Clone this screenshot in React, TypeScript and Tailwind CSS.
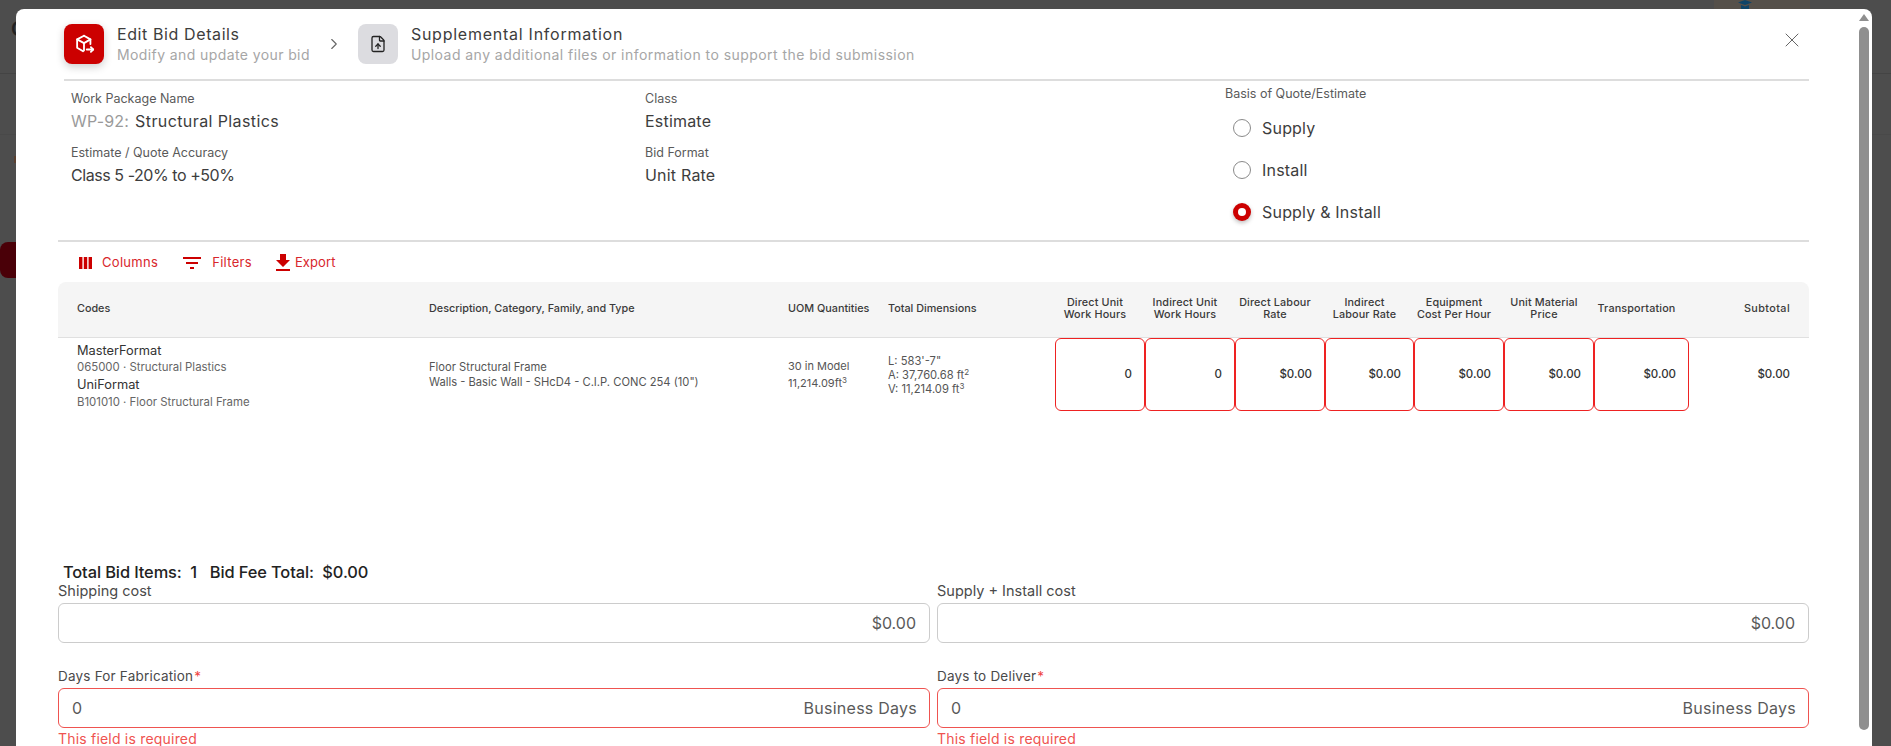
import { ChevronRight, X, FileUp } from "lucide-react";

const FONT = "[font-family:Inter,'Noto_Sans',sans-serif]";

type Column = {
  label: string[];
  width: string;
  value: string;
};

const inputColumns: Column[] = [
  { label: ["Direct Unit", "Work Hours"], width: "w-[90px]", value: "0" },
  { label: ["Indirect Unit", "Work Hours"], width: "w-[90px]", value: "0" },
  { label: ["Direct Labour", "Rate"], width: "w-[90px]", value: "$0.00" },
  { label: ["Indirect", "Labour Rate"], width: "w-[89px]", value: "$0.00" },
  { label: ["Equipment", "Cost Per Hour"], width: "w-[90px]", value: "$0.00" },
  { label: ["Unit Material", "Price"], width: "w-[90px]", value: "$0.00" },
  { label: ["Transportation"], width: "w-[95px]", value: "$0.00" },
];

function PackageIcon() {
  return (
    <svg viewBox="0 0 24 24" className="h-[22px] w-[22px]" fill="none" stroke="white" strokeWidth="2" strokeLinecap="round" strokeLinejoin="round">
      <path d="M12 3 4.5 7v9l6.5 4" />
      <path d="M12 3l7 4v5" />
      <path d="M4.5 7 12 11l7-4" />
      <path d="M12 11v8" />
      <path d="M15 18h7" />
      <path d="m19.5 15.5 2.5 2.5-2.5 2.5" />
    </svg>
  );
}

function ColumnsIcon() {
  return (
    <svg viewBox="0 0 13 12" className="h-3 w-[13px]" fill="#cc0000">
      <rect x="0" y="0" width="3.4" height="12" />
      <rect x="4.8" y="0" width="3.4" height="12" />
      <rect x="9.6" y="0" width="3.4" height="12" />
    </svg>
  );
}

function FilterIcon() {
  return (
    <svg viewBox="0 0 18 12" className="h-3 w-[18px]" fill="#cc0000">
      <rect x="0" y="0" width="18" height="2" />
      <rect x="3" y="5" width="12" height="2" />
      <rect x="7" y="10" width="4" height="2" />
    </svg>
  );
}

function ExportIcon() {
  return (
    <svg viewBox="0 0 14 17" className="h-[17px] w-[14px]" fill="#cc0000">
      <path d="M4 0h6v6h4l-7 7-7-7h4z" />
      <rect x="0" y="15" width="14" height="2" />
    </svg>
  );
}

function CapIcon() {
  return (
    <svg viewBox="0 0 14 9" className="h-[9px] w-[14px]" fill="#0f4468">
      <path d="M7 0 14 2.5 7 5 0 2.5z" />
      <path d="M3 5v4h8V5L7 6.4z" />
    </svg>
  );
}

function Radio({ label, checked }: { label: string; checked?: boolean }) {
  return (
    <div className="flex h-[42px] items-center gap-[11px] pl-2">
      {checked ? (
        <span className="flex h-[18px] w-[18px] items-center justify-center rounded-full bg-[#cc0000] shadow-[0_2px_4px_rgba(0,0,0,0.25)]">
          <span className="h-2 w-2 rounded-full bg-white" />
        </span>
      ) : (
        <span className="h-[18px] w-[18px] rounded-full border border-[#8a8a8a]" />
      )}
      <span className="text-[16px] tracking-[0.2px] text-[#3d3d3d]">{label}</span>
    </div>
  );
}

function InfoField({ label, children }: { label: string; children: React.ReactNode }) {
  return (
    <div className="flex flex-col">
      <span className="text-[12.5px] leading-[14px] text-[#5a5a5a]">{label}</span>
      <span className="mt-[4.5px] text-[16px] leading-[20px] tracking-[0.2px] text-[#3d3d3d]">{children}</span>
    </div>
  );
}

function CostField({ label, value }: { label: string; value: string }) {
  return (
    <div className="flex min-w-0 flex-1 flex-col">
      <label className="text-[14.5px] leading-[16px] text-[#4a4a4a]">{label}</label>
      <div className="mt-1 flex h-10 items-center justify-end rounded-md border border-[#ccc] px-[13px] text-[16px] text-[#5a5a5a]">
        {value}
      </div>
    </div>
  );
}

function DaysField({ label }: { label: string }) {
  return (
    <div className="flex min-w-0 flex-1 flex-col">
      <label className="text-[13.5px] leading-[16px] tracking-[0.2px] text-[#4a4a4a]">
        {label}
        <span className="ml-px text-[#ef4444]">*</span>
      </label>
      <div className="mt-1 flex h-10 items-center justify-between rounded-md border border-[#ef5350] pl-[13px] pr-3 text-[16px] tracking-[0.25px] text-[#5a5a5a]">
        <span>0</span>
        <span>Business Days</span>
      </div>
      <span className="mt-[3px] text-[14px] leading-[16px] tracking-[0.2px] text-[#ef5350]">This field is required</span>
    </div>
  );
}

export default function App() {
  return (
    <div className={`relative h-[746px] w-full overflow-hidden bg-[#4d4d4d] ${FONT}`}>
      {/* page behind the overlay */}
      <div className="absolute left-0 top-[73px] h-px w-full bg-[#444]" />
      <div className="absolute left-0 top-[134px] h-px w-full bg-[#494949]" />
      <div className="absolute left-0 top-[242px] h-9 w-4 rounded-l-lg bg-[#4a0008]" />
      <div className="absolute left-[14px] top-[156px] h-[7px] w-[2px] bg-[#5a4030]" />
      <span className="absolute left-[11px] top-[15px] text-xl font-semibold text-[#222]">C</span>
      <div className="absolute right-[81px] top-0 h-[9px] w-[96px] bg-[#55504a] pl-6">
        <CapIcon />
      </div>

      <div className="pl-4 pr-[19px] pt-[9px]">
        <div className="relative h-[737px] overflow-hidden rounded-t-lg bg-white pl-[42px] pr-[63px]">
          {/* header */}
          <div className="flex h-[70px] items-start justify-between pl-1.5 pt-[15px]">
            <div className="flex items-center">
              <div className="flex h-10 w-10 items-center justify-center rounded-lg bg-[#cc0000] shadow-[0_3px_8px_rgba(0,0,0,0.2)]">
                <PackageIcon />
              </div>
              <div className="ml-[13px] flex flex-col">
                <span className="text-[16px] leading-[20px] tracking-[0.6px] text-[#3d3d3d]">Edit Bid Details</span>
                <span className="mt-[2px] text-[14px] leading-[18px] tracking-[0.4px] text-[#a6a6a6]">Modify and update your bid</span>
              </div>
              <ChevronRight className="ml-[15px] h-[18px] w-[18px] text-[#666]" strokeWidth={1.5} />
              <div className="ml-[15px] flex h-10 w-10 items-center justify-center rounded-lg bg-[#dcdce0]">
                <FileUp className="h-[18px] w-[18px] text-[#222]" strokeWidth={1.75} />
              </div>
              <div className="ml-[13px] flex flex-col">
                <span className="text-[16px] leading-[20px] tracking-[0.75px] text-[#3d3d3d]">Supplemental Information</span>
                <span className="mt-[2px] text-[14px] leading-[18px] tracking-[0.45px] text-[#a6a6a6]">
                  Upload any additional files or information to support the bid submission
                </span>
              </div>
            </div>
            <X className="mr-[5px] mt-[4px] h-6 w-6 text-[#666]" strokeWidth={1} />
          </div>

          {/* bid info */}
          <div className="ml-1.5 border-t-2 border-[#ddd]" />
          <div className="flex h-[161px] border-b-2 border-[#ddd]">
            <div className="flex w-[587px] flex-col gap-[15.5px] pl-[13px] pt-[11px]">
              <InfoField label="Work Package Name">
                <span className="text-[#9a9a9a]">WP-92:</span>
                <span className="ml-[6px] tracking-[0.4px]">Structural Plastics</span>
              </InfoField>
              <InfoField label="Estimate / Quote Accuracy">
                <span className="tracking-[-0.44px]">Class 5 -20% to +50%</span>
              </InfoField>
            </div>
            <div className="flex w-[580px] flex-col gap-[15.5px] pt-[11px]">
              <InfoField label="Class">Estimate</InfoField>
              <InfoField label="Bid Format">Unit Rate</InfoField>
            </div>
            <div className="flex flex-col pt-[6px]">
              <span className="mb-[6px] text-[12.5px] leading-[14px] text-[#5a5a5a]">Basis of Quote/Estimate</span>
              <Radio label="Supply" />
              <Radio label="Install" />
              <Radio label="Supply & Install" checked />
            </div>
          </div>

          {/* toolbar */}
          <div className="flex h-[40px] items-center pl-[21px] pt-px text-[13px] tracking-[0.3px] text-[#d8262c]">
            <span className="flex items-center gap-[10px]">
              <ColumnsIcon />
              Columns
            </span>
            <span className="ml-[25px] flex items-center gap-[11px]">
              <FilterIcon />
              Filters
            </span>
            <span className="ml-6 flex items-center gap-[5px] tracking-[0.1px]">
              <ExportIcon />
              Export
            </span>
          </div>

          {/* table */}
          <div className="rounded-t-lg">
            <div className="flex h-[56px] items-center rounded-t-lg border-b border-[#e0e0e0] bg-[#f5f5f5] pb-[2px] text-[10.8px] font-medium leading-[12px] text-[#3a3a3a]">
              <span className="w-[371px] pl-[19px]">Codes</span>
              <span className="w-[359px]">Description, Category, Family, and Type</span>
              <span className="w-[100px]">UOM Quantities</span>
              <span className="w-[167px]">Total Dimensions</span>
              {inputColumns.map((column) => (
                <span key={column.label.join(" ")} className={`${column.width} pr-[10px] text-center tracking-[0.15px]`}>
                  {column.label.map((line) => (
                    <span key={line} className="block">
                      {line}
                    </span>
                  ))}
                </span>
              ))}
              <span className="flex-1 pr-[19px] text-right tracking-[0.4px]">Subtotal</span>
            </div>
            <div className="flex h-[73px] items-stretch text-[#444]">
              <div className="flex w-[371px] flex-col justify-center pl-[19px] pt-[3px]">
                <span className="text-[12.8px] leading-[17px] text-[#333]">MasterFormat</span>
                <span className="text-[11.4px] leading-[16px] text-[#666]">065000 · Structural Plastics</span>
                <span className="text-[12.8px] leading-[19px] text-[#333]">UniFormat</span>
                <span className="text-[11.4px] leading-[16px] text-[#666]">B101010 · Floor Structural Frame</span>
              </div>
              <div className="flex w-[359px] flex-col justify-center text-[11.2px] leading-[15px] text-[#555]">
                <span>Floor Structural Frame</span>
                <span>Walls - Basic Wall - SHcD4 - C.I.P. CONC 254 (10")</span>
              </div>
              <div className="flex w-[100px] flex-col justify-center text-[11px] leading-[17px] text-[#555]">
                <span>30 in Model</span>
                <span>
                  11,214.09ft<sup className="text-[8px]">3</sup>
                </span>
              </div>
              <div className="flex w-[167px] flex-col justify-center text-[11.2px] leading-[14px] text-[#555]">
                <span>L: 583'-7"</span>
                <span>
                  A: 37,760.68 ft<sup className="text-[8px]">2</sup>
                </span>
                <span>
                  V: 11,214.09 ft<sup className="text-[8px]">3</sup>
                </span>
              </div>
              {inputColumns.map((column) => (
                <div
                  key={column.label.join(" ")}
                  className={`${column.width} flex items-center justify-end rounded-md border border-[#ee2222] pr-3 text-[11.5px] font-medium text-[#333]`}
                >
                  {column.value}
                </div>
              ))}
              <div className="flex flex-1 items-center justify-end pr-[19px] text-[11.5px] font-medium text-[#333]">$0.00</div>
            </div>
          </div>

          {/* totals */}
          <div className="mt-[152px] whitespace-pre pl-[5px] text-[16.4px] font-medium leading-[18px] tracking-[-0.1px] text-[#222]">
            Total Bid Items:  1   Bid Fee Total:  $0.00
          </div>
          <div className="mt-[2px] flex gap-[7px]">
            <CostField label="Shipping cost" value="$0.00" />
            <CostField label="Supply + Install cost" value="$0.00" />
          </div>
          <div className="mt-[25px] flex gap-[7px]">
            <DaysField label="Days For Fabrication" />
            <DaysField label="Days to Deliver" />
          </div>

          {/* scrollbar */}
          <div className="absolute right-[3px] top-[5px] h-0 w-0 border-x-[5px] border-b-[7px] border-x-transparent border-b-[#8f8f8f]" />
          <div className="absolute right-[3px] top-[18px] h-[703px] w-[10px] rounded-full bg-[#8f8f8f]" />
        </div>
      </div>
    </div>
  );
}
